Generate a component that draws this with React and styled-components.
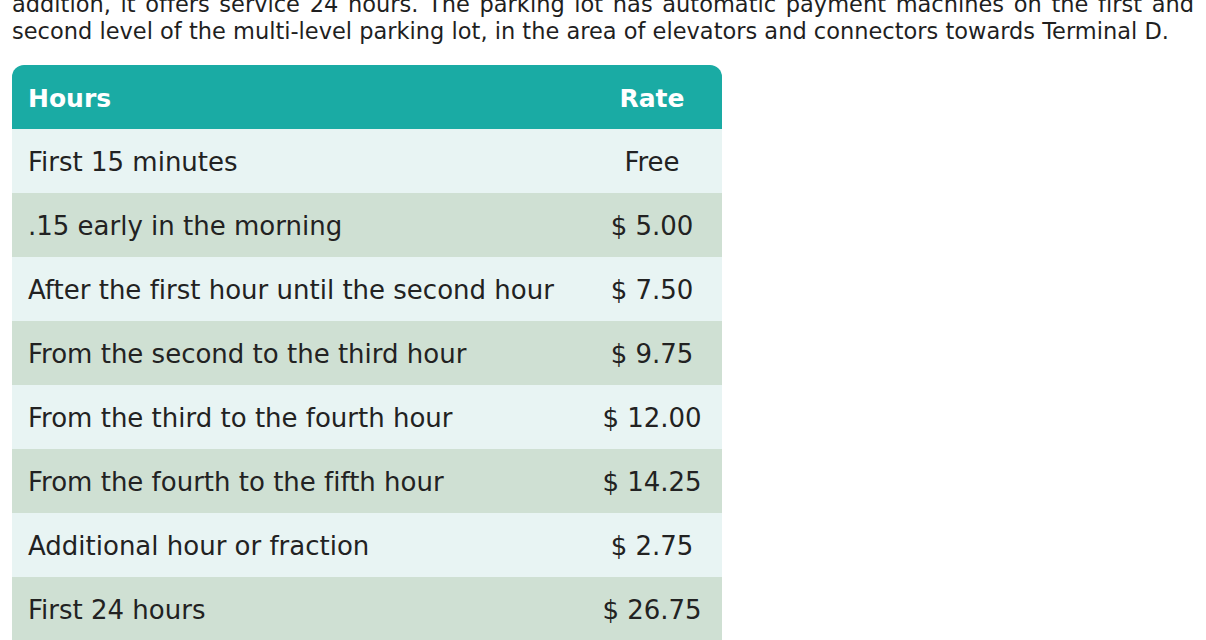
import React from 'react';
import styled, { createGlobalStyle } from 'styled-components';

const GlobalStyle = createGlobalStyle`
  html, body {
    margin: 0;
    padding: 0;
    background: #ffffff;
  }
  body {
    font-family: "DejaVu Sans", Verdana, sans-serif;
    font-variant-ligatures: none;
    color: #1f1f1f;
    overflow: hidden;
  }
`;

const Page = styled.div`
  width: 1206px;
  height: 640px;
  overflow: hidden;
  padding: 0 12px;
  box-sizing: border-box;
`;

const Intro = styled.div`
  margin-top: -9px;
  width: 1182px;
  font-size: 22.5px;
  line-height: 27px;
`;

const IntroLine = styled.div`
  white-space: nowrap;
  text-align: ${(p) => (p.$justify ? 'justify' : 'left')};
  text-align-last: ${(p) => (p.$justify ? 'justify' : 'left')};
`;

const Table = styled.div`
  margin-top: 20px;
  width: 710px;
  display: grid;
  grid-template-columns: 570px 140px;
  border-radius: 12px 12px 0 0;
  overflow: hidden;
  font-size: 26px;
`;

const Cell = styled.div`
  height: 64px;
  box-sizing: border-box;
  padding-top: 2px;
  display: flex;
  align-items: center;
  justify-content: ${(p) => (p.$rate ? 'center' : 'flex-start')};
  padding-left: ${(p) => (p.$rate ? '0' : '16px')};
  background: ${(p) => p.$bg};
  color: #222222;
`;

const HeadCell = styled(Cell)`
  background: #1aaba4;
  color: #ffffff;
  font-weight: bold;
  font-size: 25px;
`;

const rows = [
  ['First 15 minutes', 'Free'],
  ['.15 early in the morning', '$ 5.00'],
  ['After the first hour until the second hour', '$ 7.50'],
  ['From the second to the third hour', '$ 9.75'],
  ['From the third to the fourth hour', '$ 12.00'],
  ['From the fourth to the fifth hour', '$ 14.25'],
  ['Additional hour or fraction', '$ 2.75'],
  ['First 24 hours', '$ 26.75'],
];

export default function App() {
  return (
    <>
      <GlobalStyle />
      <Page>
        <Intro>
          <IntroLine $justify>
            addition, it offers service 24 hours. The parking lot has automatic payment machines on the first and
          </IntroLine>
          <IntroLine>
            second level of the multi-level parking lot, in the area of elevators and connectors towards Terminal D.
          </IntroLine>
        </Intro>
        <Table>
          <HeadCell>Hours</HeadCell>
          <HeadCell $rate>Rate</HeadCell>
          {rows.map((r, i) => {
            const bg = i % 2 === 0 ? '#e8f4f3' : '#cfe0d3';
            return (
              <React.Fragment key={i}>
                <Cell $bg={bg}>{r[0]}</Cell>
                <Cell $bg={bg} $rate>{r[1]}</Cell>
              </React.Fragment>
            );
          })}
        </Table>
      </Page>
    </>
  );
}
